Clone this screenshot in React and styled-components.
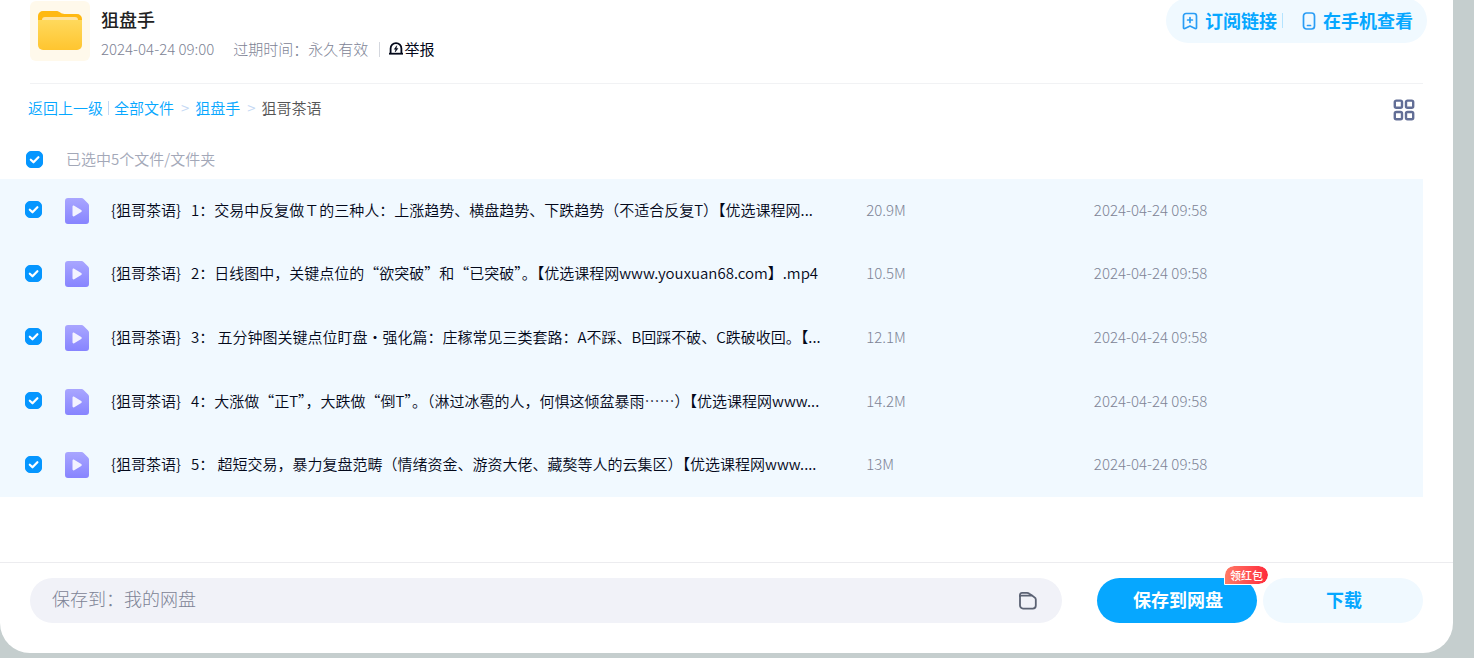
import React, { useState } from "react";
import styled, { createGlobalStyle } from "styled-components";

const data = [
  { id: 1, name: "{狙哥茶语}   1：交易中反复做Ｔ的三种人：上涨趋势、横盘趋势、下跌趋势（不适合反复T）【优选课程网...", size: "20.9M", time: "2024-04-24 09:58" },
  { id: 2, name: "{狙哥茶语}   2：日线图中，关键点位的“欲突破”和“已突破”。【优选课程网www.youxuan68.com】.mp4", size: "10.5M", time: "2024-04-24 09:58" },
  { id: 3, name: "{狙哥茶语}   3： 五分钟图关键点位盯盘・强化篇：庄稼常见三类套路：A不踩、B回踩不破、C跌破收回。【...", size: "12.1M", time: "2024-04-24 09:58" },
  { id: 4, name: "{狙哥茶语}   4：大涨做“正T”，大跌做“倒T”。（淋过冰雹的人，何惧这倾盆暴雨……）【优选课程网www...", size: "14.2M", time: "2024-04-24 09:58" },
  { id: 5, name: "{狙哥茶语}   5： 超短交易，暴力复盘范畴（情绪资金、游资大佬、藏獒等人的云集区）【优选课程网www....", size: "13M", time: "2024-04-24 09:58" },
];

function FolderIcon() {
  return (
    <svg width="46" height="42" viewBox="0 0 46 42" aria-hidden="true">
      <defs>
        <linearGradient id="folderFront" x1="0" y1="0" x2="0" y2="1">
          <stop offset="0" stopColor="#ffd95c" />
          <stop offset="1" stopColor="#ffc52f" />
        </linearGradient>
      </defs>
      <path d="M1 6a5 5 0 0 1 5-5h13c2 0 3 .6 4.300 1.600C24.600 3.700 25.600 4 27.500 4H40a5 5 0 0 1 5 5v14H1z" fill="#ffb912" />
      <path d="M5 10a3 3 0 0 1 3-3h30a3 3 0 0 1 3 3v4H5z" fill="#ffe3a0" />
      <path d="M1 10h44v25a5 5 0 0 1-5 5H6a5 5 0 0 1-5-5z" fill="url(#folderFront)" />
    </svg>
  );
}

function AlarmIcon() {
  return (
    <svg width="16" height="16" viewBox="0 0 16 16" fill="none" stroke="#03081a" strokeWidth="1.800" aria-hidden="true">
      <path d="M2.600 12.500V7.500a5.400 5.400 0 0 1 10.800 0v5" />
      <path d="M1 12.700h14" />
      <path d="M8.700 4.700 6.300 8.300h1.500L7.200 11 9.900 7.400H8.200z" fill="#03081a" strokeWidth=".5" />
    </svg>
  );
}

function BookmarkIcon() {
  return (
    <svg width="16" height="18" viewBox="0 0 16 18" fill="none" stroke="#2a9df5" strokeWidth="1.700" strokeLinejoin="round" strokeLinecap="round" aria-hidden="true">
      <path d="M1.500 4A2.500 2.500 0 0 1 4 1.500h8A2.500 2.500 0 0 1 14.500 4v11.700c0 .8-.8 1.100-1.400.7L8 14l-5.100 2.400c-.6.400-1.400.1-1.400-.7z" />
      <path d="M8 5.600v4.800M5.600 8h4.800" />
    </svg>
  );
}

function PhoneIcon() {
  return (
    <svg width="14" height="18" viewBox="0 0 14 18" fill="none" stroke="#2a9df5" strokeWidth="1.700" strokeLinecap="round" aria-hidden="true">
      <rect x="1.500" y="1" width="11" height="16" rx="3" />
      <path d="M5.500 13.500h3" />
    </svg>
  );
}

function GridIcon() {
  return (
    <svg width="22" height="22" viewBox="0 0 22 22" fill="none" stroke="#626e96" strokeWidth="2.400" aria-hidden="true">
      <rect x="1.800" y="1.600" width="7.200" height="7.200" rx="1.500" />
      <rect x="13" y="1.600" width="7.200" height="7.200" rx="1.500" />
      <rect x="1.800" y="13" width="7.200" height="7.200" rx="1.500" />
      <rect x="13" y="13" width="7.200" height="7.200" rx="1.500" />
    </svg>
  );
}

function VideoIcon() {
  return (
    <svg width="24" height="28" viewBox="0 0 24 28" aria-hidden="true">
      <defs>
        <linearGradient id="videoBody" x1="0" y1="0" x2="0" y2="1">
          <stop offset="0" stopColor="#a9a6ff" />
          <stop offset="1" stopColor="#8784ff" />
        </linearGradient>
      </defs>
      <path d="M0 4a3 3 0 0 1 3-3h13.500c.8 0 1.500.3 2.100.9l4.500 4.500c.6.600.9 1.300.9 2.100V24a3 3 0 0 1-3 3H3a3 3 0 0 1-3-3z" fill="url(#videoBody)" />
      <path d="M7.500 9.800c0-1 .9-1.500 1.700-1l7 4.200c.8.500.8 1.500 0 2l-7 4.200c-.8.500-1.700 0-1.700-1z" fill="#f3f2ff" />
    </svg>
  );
}

function SaveFolderIcon() {
  return (
    <svg width="20" height="20" viewBox="0 0 20 20" fill="none" stroke="#5b6273" strokeWidth="1.800" strokeLinejoin="round" aria-hidden="true">
      <path d="M2 4.600h12L16.400 6.200Q17.800 7 17.800 8.600V14.600a3 3 0 0 1-3 3H5a3 3 0 0 1-3-3z" />
      <path d="M2 6V3.800a2 2 0 0 1 2-2H9c1 0 1.600.3 2.300.9L14 4.600" />
    </svg>
  );
}

function Check({ checked, onChange, label, id }) {
  return (
    <CheckWrap>
      <input id={id} type="checkbox" checked={checked} onChange={onChange} aria-label={label} />
      {checked && (
        <svg width="17" height="17" viewBox="0 0 17 17" fill="none" stroke="#fff" strokeWidth="2.200" strokeLinecap="round" strokeLinejoin="round" aria-hidden="true">
          <path d="M4.800 8.700 7.500 11.300 12.400 6.200" />
        </svg>
      )}
    </CheckWrap>
  );
}

export default function App() {
  const [selected, setSelected] = useState(data.map((x) => x.id));
  const all = selected.length === data.length;

  const toggle = (id) => {
    setSelected(selected.includes(id) ? selected.filter((x) => x !== id) : [...selected, id]);
  };

  return (
    <>
      <GlobalStyle />
      <Panel>
        <Header>
          <Cover>
            <FolderIcon />
          </Cover>
          <Info>
            <h1>狙盘手</h1>
            <Meta>
              <span>2024-04-24 09:00</span>
              <span>过期时间：永久有效</span>
              <Report type="button">
                <AlarmIcon />
                举报
              </Report>
            </Meta>
          </Info>
          <Actions>
            <ActionButton type="button">
              <BookmarkIcon />
              <span>订阅链接</span>
            </ActionButton>
            <Split />
            <ActionButton type="button">
              <PhoneIcon />
              <span>在手机查看</span>
            </ActionButton>
          </Actions>
        </Header>

        <Toolbar>
          <Crumbs>
            <a href="#back">返回上一级</a>
            <Bar />
            <a href="#all">全部文件</a>
            <Arrow>&gt;</Arrow>
            <a href="#folder">狙盘手</a>
            <Arrow>&gt;</Arrow>
            <span>狙哥茶语</span>
          </Crumbs>
          <ViewButton type="button" aria-label="切换视图">
            <GridIcon />
          </ViewButton>
        </Toolbar>

        <SelectBar>
          <Check id="all" checked={all} onChange={() => setSelected(all ? [] : data.map((x) => x.id))} />
          <label htmlFor="all">已选中{selected.length}个文件/文件夹</label>
        </SelectBar>

        <FileTable>
          <colgroup>
            <col className="check" />
            <col className="icon" />
            <col className="name" />
            <col className="size" />
            <col />
          </colgroup>
          <tbody>
            {data.map((x) => {
              const checked = selected.includes(x.id);
              return (
                <Row key={x.id} $checked={checked}>
                  <CheckCell>
                    <Check checked={checked} onChange={() => toggle(x.id)} label={x.name} />
                  </CheckCell>
                  <Cell>
                    <VideoIcon />
                  </Cell>
                  <NameCell>{x.name}</NameCell>
                  <TextCell>{x.size}</TextCell>
                  <TextCell>{x.time}</TextCell>
                </Row>
              );
            })}
          </tbody>
        </FileTable>

        <Footer>
          <SavePath type="button">
            <span>保存到：我的网盘</span>
            <SaveFolderIcon />
          </SavePath>
          <Buttons>
            <MainButton type="button" $primary>
              保存到网盘
              <Badge>领红包</Badge>
            </MainButton>
            <MainButton type="button">下载</MainButton>
          </Buttons>
        </Footer>
      </Panel>
    </>
  );
}

const GlobalStyle = createGlobalStyle`
  * {
    box-sizing: border-box;
  }
  body {
    margin: 0;
    background: #c5cece;
    color: #03081a;
    font: 350 15px/22px "Noto Sans CJK SC", sans-serif;
  }
  button {
    font: inherit;
    color: inherit;
    border: 0;
    padding: 0;
    background: none;
    cursor: pointer;
  }
  a {
    color: #06a7ff;
    text-decoration: none;
  }
  svg {
    display: block;
    flex: none;
  }
`;

const Panel = styled.main`
  display: flex;
  flex-direction: column;
  min-height: calc(100vh - 5px);
  margin: 0 21px 5px 0;
  background: #fff;
  border-radius: 0 0 30px 30px;
  overflow: hidden;
`;

const Header = styled.header`
  display: flex;
  align-items: flex-start;
  margin: 0 30px;
  padding: 1px 0 22px;
  border-bottom: 1px solid #f1f2f4;
`;

const Cover = styled.div`
  display: grid;
  place-items: center;
  width: 60px;
  height: 60px;
  border-radius: 6px;
  background: #fff9eb;
`;

const Info = styled.div`
  flex: 1;
  padding: 6px 0 0 11px;
  h1 {
    margin: 0 0 7px;
    font-size: 18px;
    font-weight: 500;
    line-height: 24px;
    color: #222;
  }
`;

const Meta = styled.div`
  display: flex;
  align-items: center;
  gap: 19px;
  color: #7d8395;
  font-weight: 300;
`;

const Report = styled.button`
  display: flex;
  align-items: center;
  height: 15px;
  margin-left: -8px;
  padding-left: 8px;
  border-left: 1px solid #d4d7de;
  color: #03081a;
  font-weight: 400;
`;

const Actions = styled.div`
  display: flex;
  align-items: center;
  height: 45px;
  margin: -3px -4px 0 0;
  padding: 0 14px 0 16px;
  border-radius: 23px;
  background: #f0f9ff;
`;

const ActionButton = styled.button`
  display: flex;
  align-items: center;
  gap: 7px;
  color: #06a7ff;
  font-size: 18px;
  font-weight: 700;
  span {
    padding-bottom: 2px;
  }
`;

const Split = styled.i`
  width: 1px;
  height: 15px;
  margin: 0 19px 0 5px;
  background: #b4e4ff;
`;

const Toolbar = styled.div`
  display: flex;
  align-items: center;
  justify-content: space-between;
  height: 51px;
  padding: 0 38px 0 28px;
`;

const Crumbs = styled.nav`
  display: flex;
  align-items: center;
  padding-bottom: 3px;
  color: #555;
`;

const Bar = styled.i`
  width: 1px;
  height: 14px;
  margin: 0 5px;
  background: #c4d8f4;
`;

const Arrow = styled.span`
  margin: 0 6px 0 7px;
  color: #c4d8f4;
`;

const ViewButton = styled.button`
  display: block;
`;

const SelectBar = styled.div`
  display: flex;
  align-items: center;
  gap: 23px;
  height: 44px;
  padding: 4px 26px 0;
  color: #a3a8b8;
`;

const CheckWrap = styled.span`
  display: grid;
  width: 17px;
  height: 17px;
  input,
  svg {
    grid-area: 1 / 1;
  }
  input {
    appearance: none;
    width: 17px;
    height: 17px;
    margin: 0;
    border: 1px solid #0596ff;
    border-radius: 5px;
    &:checked {
      background: #0596ff;
    }
  }
  svg {
    pointer-events: none;
  }
`;

const FileTable = styled.table`
  table-layout: fixed;
  width: calc(100% - 30px);
  height: 318px;
  border-collapse: collapse;
  .check {
    width: 65px;
  }
  .icon {
    width: 46px;
  }
  .name {
    width: 53%;
  }
  .size {
    width: 16%;
  }
`;

const Row = styled.tr`
  background: ${(p) => (p.$checked ? "#f1f9ff" : "#fff")};
`;

const Cell = styled.td`
  padding: 0;
  white-space: nowrap;
`;

const CheckCell = styled(Cell)`
  padding: 0 0 2px 25px;
`;

const TextCell = styled(Cell)`
  padding: 0 0 2px 1px;
  color: #7d8395;
  font-weight: 300;
`;

const NameCell = styled(Cell)`
  padding: 0 40px 2px 0;
  overflow: hidden;
  text-overflow: ellipsis;
  white-space: pre;
  color: #03081a;
`;

const Footer = styled.footer`
  display: flex;
  gap: 35px;
  margin-top: auto;
  padding: 15px 30px 30px;
  border-top: 1px solid #ececef;
`;

const SavePath = styled.button`
  display: flex;
  align-items: center;
  justify-content: space-between;
  flex: 1;
  height: 45px;
  padding: 0 24px 0 22px;
  border-radius: 23px;
  background: #f1f2f8;
  color: #7d8395;
  font-size: 18px;
  font-weight: 300;
  span {
    padding-bottom: 5px;
  }
`;

const Buttons = styled.div`
  display: flex;
  gap: 6px;
`;

const MainButton = styled.button`
  position: relative;
  width: 160px;
  height: 45px;
  padding: 0 0 3px 2px;
  border-radius: 23px;
  background: ${(p) => (p.$primary ? "#06a7ff" : "#f0f9ff")};
  color: ${(p) => (p.$primary ? "#fff" : "#06a7ff")};
  font-size: 18px;
  font-weight: 700;
`;

const Badge = styled.span`
  position: absolute;
  top: -13px;
  right: -12px;
  padding: 0 5px;
  border: 1px solid #fff;
  border-radius: 10px 10px 10px 0;
  background: linear-gradient(90deg, #ff7a66, #ff2a3c);
  background-clip: padding-box;
  color: #fff;
  font-size: 11px;
  font-weight: 500;
  line-height: 18px;
`;
